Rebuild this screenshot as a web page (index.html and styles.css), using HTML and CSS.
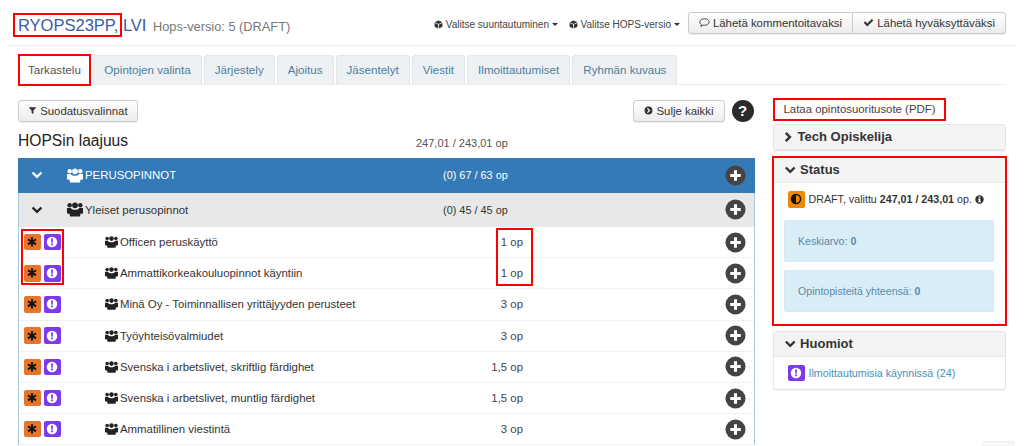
FILE: index.html
```html
<!doctype html>
<html lang="fi">
  <head>
    <meta charset="UTF-8" />
    <meta name="viewport" content="width=device-width, initial-scale=1.0" />
    <title>HOPS</title>
    <link rel="stylesheet" href="styles.css">
  </head>
  <body>
    <svg class="sprites" width="0" height="0" aria-hidden="true">
      <symbol id="i-users" viewBox="0 0 18 16">
        <circle cx="3" cy="3.200" r="2.500"/><circle cx="15" cy="3.200" r="2.500"/><circle cx="9" cy="3.300" r="3.200"/>
        <path d="M0 6.400h3.800c.3 0 .6.200.8.400.9 1 2.200 1.500 4.400 1.500s3.500-.5 4.400-1.500c.2-.2.5-.4.800-.4H18v5.300c0 .7-.4 1.100-1.100 1.100h-2V15c0 .6-.4 1-1 1H4.100c-.6 0-1-.4-1-1v-2.200h-2C.4 12.800 0 12.400 0 11.700z"/>
      </symbol>
      <symbol id="i-chev-down" viewBox="0 0 16 16">
        <path d="M1 5.800 3.300 3.500 8 8.200l4.700-4.700L15 5.800l-7 7z"/>
      </symbol>
      <symbol id="i-chev-right" viewBox="0 0 16 16">
        <path d="M5.200.8 12.600 8l-7.400 7.200-2.500-2.400L7.600 8 2.700 3.200z"/>
      </symbol>
      <symbol id="i-plus" viewBox="0 0 22 22">
        <circle cx="11" cy="11" r="10.500"/>
        <path fill="#fff" d="M9.400 5.500h3.200v3.900h3.900v3.200h-3.900v3.900H9.400v-3.900H5.500V9.400h3.900z"/>
      </symbol>
      <symbol id="i-star" viewBox="0 0 16 16">
        <path d="M6.600 1.500h2.800l-.3 4.200 3.500-2.300 1.400 2.400L10.200 7.800l3.800 2-1.400 2.400-3.500-2.300.3 4.200H6.600l.3-4.200-3.500 2.300L2 9.800l3.800-2L2 5.800l1.400-2.400 3.500 2.300z"/>
      </symbol>
      <symbol id="i-alert" viewBox="0 0 16 16">
        <circle cx="8" cy="8" r="7" fill="#fff"/>
        <path fill="#7c3aed" d="M6.700 3.200h2.600l-.3 5.800H7zM6.800 10h2.400v2.400H6.800z"/>
      </symbol>
      <symbol id="i-half" viewBox="0 0 16 16">
        <circle cx="8" cy="8" r="6" fill="none" stroke="#111" stroke-width="2"/>
        <path d="M8 2a6 6 0 0 0 0 12z"/>
      </symbol>
      <symbol id="i-info" viewBox="0 0 16 16">
        <circle cx="8" cy="8" r="7.500"/>
        <path fill="#fff" d="M6.500 2.800h3v2.200h-3zM5.800 6.300h3.700V11h1v2h-5v-2h1V8.300h-.7z"/>
      </symbol>
      <symbol id="i-cube" viewBox="0 0 16 16">
        <path d="M8 1 15 4 8 7 1 4zM1 5.200l6.300 2.700V15L1 12.200zM15 5.200 8.700 7.900V15L15 12.200z"/>
      </symbol>
      <symbol id="i-filter" viewBox="0 0 16 16">
        <path d="M1 2h14L9.700 8v6.500L6.300 12V8z"/>
      </symbol>
      <symbol id="i-check" viewBox="0 0 16 16">
        <path d="M1 8.500 3.200 6.300 6.200 9.300 12.800 2.800 15 5 6.200 13.800z"/>
      </symbol>
      <symbol id="i-comment" viewBox="0 0 16 16">
        <path fill="none" stroke="#333" stroke-width="1.300" d="M8 2.500c3.800 0 6.800 2.100 6.800 4.700S11.800 12 8 12c-.7 0-1.300-.1-1.900-.2-.9.8-2.200 1.500-3.900 1.700.8-.8 1.300-1.700 1.400-2.700C2.200 9.900 1.200 8.600 1.200 7.200 1.200 4.600 4.200 2.500 8 2.500z"/>
      </symbol>
      <symbol id="i-circle-right" viewBox="0 0 16 16">
        <circle cx="8" cy="8" r="7"/>
        <path fill="#fff" d="M6.800 3.500 11.300 8l-4.500 4.500-1.500-1.500 3-3-3-3z"/>
      </symbol>
    </svg>

    <header class="page-head">
      <h1 class="page-title"><span class="marked">RYOPS23PP,</span> LVI <small>Hops-versio: 5 (DRAFT)</small></h1>
      <div class="head-actions">
        <a class="head-link"><svg class="ico"><use href="#i-cube"/></svg> Valitse suuntautuminen <i class="caret"></i></a>
        <a class="head-link"><svg class="ico"><use href="#i-cube"/></svg> Valitse HOPS-versio <i class="caret"></i></a>
        <div class="btn-group">
          <button class="btn"><svg class="ico"><use href="#i-comment"/></svg> Lähetä kommentoitavaksi</button>
          <button class="btn"><svg class="ico"><use href="#i-check"/></svg> Lähetä hyväksyttäväksi</button>
        </div>
      </div>
    </header>

    <nav class="tabs">
      <a class="tab active">Tarkastelu</a>
      <a class="tab">Opintojen valinta</a>
      <a class="tab">Järjestely</a>
      <a class="tab">Ajoitus</a>
      <a class="tab">Jäsentelyt</a>
      <a class="tab">Viestit</a>
      <a class="tab">Ilmoittautumiset</a>
      <a class="tab">Ryhmän kuvaus</a>
    </nav>

    <div class="layout">
      <main class="main-col">
        <div class="toolbar">
          <button class="btn"><svg class="ico"><use href="#i-filter"/></svg> Suodatusvalinnat</button>
          <div class="toolbar-right">
            <button class="btn"><svg class="ico"><use href="#i-circle-right"/></svg> Sulje kaikki</button>
            <span class="help">?</span>
          </div>
        </div>
        <div class="scope">
          <h2>HOPSin laajuus</h2>
          <span class="scope-points">247,01 / 243,01 op</span>
        </div>

        <div class="tree">
          <div class="group group-primary">
            <svg class="chev"><use href="#i-chev-down"/></svg>
            <svg class="users"><use href="#i-users"/></svg>
            <span class="group-name">PERUSOPINNOT</span>
            <span class="group-points">(0) 67 / 63 op</span>
            <svg class="plus"><use href="#i-plus"/></svg>
          </div>
          <div class="group group-sub">
            <svg class="chev"><use href="#i-chev-down"/></svg>
            <svg class="users"><use href="#i-users"/></svg>
            <span class="group-name">Yleiset perusopinnot</span>
            <span class="group-points">(0) 45 / 45 op</span>
            <svg class="plus"><use href="#i-plus"/></svg>
          </div>

          <div class="row">
            <span class="flag flag-orange"><svg><use href="#i-star"/></svg></span>
            <span class="flag flag-purple"><svg><use href="#i-alert"/></svg></span>
            <svg class="users"><use href="#i-users"/></svg>
            <span class="row-name">Officen peruskäyttö</span>
            <span class="row-points">1 op</span>
            <svg class="plus"><use href="#i-plus"/></svg>
          </div>
          <div class="row">
            <span class="flag flag-orange"><svg><use href="#i-star"/></svg></span>
            <span class="flag flag-purple"><svg><use href="#i-alert"/></svg></span>
            <svg class="users"><use href="#i-users"/></svg>
            <span class="row-name">Ammattikorkeakouluopinnot käyntiin</span>
            <span class="row-points">1 op</span>
            <svg class="plus"><use href="#i-plus"/></svg>
          </div>
          <div class="row">
            <span class="flag flag-orange"><svg><use href="#i-star"/></svg></span>
            <span class="flag flag-purple"><svg><use href="#i-alert"/></svg></span>
            <svg class="users"><use href="#i-users"/></svg>
            <span class="row-name">Minä Oy - Toiminnallisen yrittäjyyden perusteet</span>
            <span class="row-points">3 op</span>
            <svg class="plus"><use href="#i-plus"/></svg>
          </div>
          <div class="row">
            <span class="flag flag-orange"><svg><use href="#i-star"/></svg></span>
            <span class="flag flag-purple"><svg><use href="#i-alert"/></svg></span>
            <svg class="users"><use href="#i-users"/></svg>
            <span class="row-name">Työyhteisövalmiudet</span>
            <span class="row-points">3 op</span>
            <svg class="plus"><use href="#i-plus"/></svg>
          </div>
          <div class="row">
            <span class="flag flag-orange"><svg><use href="#i-star"/></svg></span>
            <span class="flag flag-purple"><svg><use href="#i-alert"/></svg></span>
            <svg class="users"><use href="#i-users"/></svg>
            <span class="row-name">Svenska i arbetslivet, skriftlig färdighet</span>
            <span class="row-points">1,5 op</span>
            <svg class="plus"><use href="#i-plus"/></svg>
          </div>
          <div class="row">
            <span class="flag flag-orange"><svg><use href="#i-star"/></svg></span>
            <span class="flag flag-purple"><svg><use href="#i-alert"/></svg></span>
            <svg class="users"><use href="#i-users"/></svg>
            <span class="row-name">Svenska i arbetslivet, muntlig färdighet</span>
            <span class="row-points">1,5 op</span>
            <svg class="plus"><use href="#i-plus"/></svg>
          </div>
          <div class="row">
            <span class="flag flag-orange"><svg><use href="#i-star"/></svg></span>
            <span class="flag flag-purple"><svg><use href="#i-alert"/></svg></span>
            <svg class="users"><use href="#i-users"/></svg>
            <span class="row-name">Ammatillinen viestintä</span>
            <span class="row-points">3 op</span>
            <svg class="plus"><use href="#i-plus"/></svg>
          </div>

          <!-- punaiset merkinnät rivien päällä -->
          <div class="mark mark-flags"></div>
          <div class="mark mark-points"></div>
        </div>
      </main>

      <aside class="side-col">
        <a class="pdf-link">Lataa opintosuoritusote (PDF)</a>

        <section class="panel panel-tech">
          <h3 class="panel-head"><svg class="panel-chev"><use href="#i-chev-right"/></svg> Tech Opiskelija</h3>
        </section>

        <section class="panel panel-marked">
          <h3 class="panel-head"><svg class="panel-chev"><use href="#i-chev-down"/></svg> Status</h3>
          <div class="panel-body">
            <p class="status-line">
              <span class="flag flag-amber"><svg><use href="#i-half"/></svg></span>
              <span>DRAFT, valittu <b>247,01 / 243,01</b> op. <svg class="ico ico-info"><use href="#i-info"/></svg></span>
            </p>
            <div class="note">Keskiarvo: <b>0</b></div>
            <div class="note">Opintopisteitä yhteensä: <b>0</b></div>
          </div>
        </section>

        <section class="panel panel-notes">
          <h3 class="panel-head"><svg class="panel-chev"><use href="#i-chev-down"/></svg> Huomiot</h3>
          <div class="panel-body">
            <p class="status-line">
              <span class="flag flag-purple"><svg><use href="#i-alert"/></svg></span>
              <a class="notice-link">Ilmoittautumisia käynnissä (24)</a>
            </p>
          </div>
        </section>
      </aside>
    </div>

    <div class="to-top"></div>
  </body>
</html>
```

FILE: styles.css
```css
html, body {
  height: 446px;
  overflow: hidden;
}
body {
  margin: 0;
  font-family: "Liberation Sans", Arial, sans-serif;
  font-size: 11.400px;
  color: #333;
  background: #fff;
  position: relative;
}
.sprites {
  position: absolute;
}
.ico {
  width: 11px;
  height: 11px;
  fill: #333;
  vertical-align: -1px;
}

/* otsikko */
.page-head {
  display: flex;
  justify-content: space-between;
  align-items: center;
  height: 46px;
  margin: 0 8px;
  padding: 1px 10px 0;
  border-bottom: 1px solid #eee;
  box-sizing: border-box;
}
.page-title {
  margin: 0;
  padding-top: 5px;
  font-size: 16.500px;
  font-weight: normal;
  color: #3b5ba5;
  white-space: nowrap;
}
.page-title small {
  font-size: 12.800px;
  color: #777;
  margin-left: 2px;
}
.marked {
  padding: 1px 2px 1px 3px;
  margin: 0 -2px 0 -3px;
  outline: 2px solid #f00;
}
.head-actions {
  display: flex;
  align-items: center;
}
.head-link {
  font-size: 10px;
  color: #444;
  margin: 2px 11px 0 0;
  white-space: nowrap;
}
.head-link + .head-link {
  margin-right: 8px;
}
.head-link .ico {
  width: 9px;
  height: 9px;
}
.caret {
  display: inline-block;
  border-top: 3px solid #333;
  border-left: 3px solid transparent;
  border-right: 3px solid transparent;
  vertical-align: 2px;
}
.btn {
  font-family: inherit;
  font-size: 11.400px;
  color: #333;
  height: 22px;
  padding: 0 10px;
  background: linear-gradient(#fff, #ececec);
  border: 1px solid #ccc;
  border-radius: 3px;
  box-shadow: 0 1px 1px rgba(0,0,0,0.08);
  white-space: nowrap;
}
.btn-group {
  display: flex;
}
.btn-group .btn:first-child {
  border-radius: 3px 0 0 3px;
}
.btn-group .btn:last-child {
  border-left: none;
  border-radius: 0 3px 3px 0;
}

/* välilehdet */
.tabs {
  display: flex;
  gap: 2px;
  height: 30px;
  margin: 9px 18px 0;
  border-bottom: 1px solid #eee;
  box-sizing: border-box;
}
.tab {
  padding: 0 10px;
  line-height: 28px;
  font-size: 11.600px;
  color: #4a7f9c;
  background: #edf1f4;
  border: 1px solid #e2e6e8;
  border-bottom: none;
  border-radius: 3px 3px 0 0;
}
.tab.active {
  margin: 1px 2px 0 1.500px;
  padding: 0 8.500px;
  line-height: 27px;
  color: #555;
  background: #fff;
  border: none;
  border-radius: 0;
  outline: 2px solid #f00;
}

/* sarakkeet */
.layout {
  display: flex;
  gap: 18px;
  margin: 15px 18px 0;
}
.main-col {
  width: 737px;
}
.side-col {
  width: 233px;
}
.toolbar {
  display: flex;
  justify-content: space-between;
  align-items: center;
  height: 22px;
}
.toolbar .ico {
  width: 9px;
  height: 9px;
  vertical-align: 0;
}
.toolbar > .btn {
  padding: 0 9px;
}
.toolbar-right {
  display: flex;
  align-items: center;
  gap: 7px;
  margin-right: 1.500px;
}
.help {
  width: 22px;
  height: 22px;
  border-radius: 50%;
  background: #2b2b2b;
  color: #fff;
  font-weight: bold;
  font-size: 15px;
  line-height: 22px;
  text-align: center;
}
.scope {
  display: flex;
  align-items: center;
  height: 36px;
  padding-top: 2px;
  box-sizing: border-box;
}
.scope h2 {
  width: 398px;
  margin: 0;
  font-size: 15.600px;
  font-weight: normal;
  color: #222;
}
.scope-points {
  font-size: 11px;
  color: #555;
  padding-top: 3px;
}

/* puu */
.tree {
  position: relative;
  border-left: 1px solid #a9c7e4;
  border-right: 1px solid #a9c7e4;
}
.group, .row {
  display: flex;
  align-items: center;
}
.group {
  height: 34.500px;
}
.group-primary {
  background: #337ab7;
  color: #fff;
  fill: #fff;
  margin: 0 -1px;
  padding: 0 1px;
}
.group-sub {
  background: #e8e8e8;
  fill: #222;
  color: #333;
}
.chev {
  width: 12px;
  height: 12px;
  margin: 0 24px 0 12px;
  flex: none;
}
.group .users {
  width: 16px;
  height: 15px;
  flex: none;
  margin-right: 2px;
}
.group-name {
  width: 358px;
  flex: none;
}
.group-points {
  font-size: 10.900px;
  flex: 1;
}
.plus {
  width: 21px;
  height: 21px;
  fill: #444;
  flex: none;
  margin-right: 8px;
}
.row {
  height: 31.200px;
  box-sizing: border-box;
  border-bottom: 1px solid #f0f0f0;
  padding-left: 5px;
  fill: #222;
}
.row .users {
  width: 13px;
  height: 12px;
  flex: none;
  margin: 0 2px 0 41px;
}
.row-name {
  width: 342px;
  flex: none;
  color: #333;
}
.row-points {
  width: 61px;
  flex: none;
  text-align: right;
  color: #444;
}
.row .plus {
  margin-left: auto;
}
.flag {
  display: inline-flex;
  align-items: center;
  justify-content: center;
  width: 16.500px;
  height: 16.500px;
  border-radius: 2px;
  margin-right: 3.500px;
  flex: none;
}
.flag svg {
  width: 12px;
  height: 12px;
}
.flag-orange {
  background: #e5742c;
  fill: #111;
}
.flag-purple {
  background: #7c3aed;
}
.flag-amber {
  background: #ee8a00;
  fill: #111;
}
.mark {
  position: absolute;
  border: 2px solid #f00;
  box-sizing: border-box;
}
.mark-flags {
  left: 1.500px;
  top: 71px;
  width: 43px;
  height: 56px;
}
.mark-points {
  left: 477px;
  top: 70px;
  width: 37px;
  height: 58px;
}

/* oikea sarake */
.pdf-link {
  display: block;
  width: 173px;
  height: 23px;
  margin-top: -2px;
  line-height: 22px;
  text-align: center;
  color: #444;
  outline: 2px solid #f00;
  outline-offset: -2px;
}
.panel {
  background: #fff;
  border: 1px solid #e4e4e4;
  border-radius: 3px;
  box-shadow: 0 1px 1px rgba(0,0,0,0.05);
}
.panel-tech {
  margin-top: 3px;
}
.panel-tech .panel-head {
  padding-left: 9px;
}
.panel-tech .panel-chev {
  width: 11px;
}
.panel-notes {
  margin-top: 5px;
}
.panel-head {
  margin: 0;
  height: 24px;
  line-height: 24px;
  padding-left: 10px;
  font-size: 13px;
  font-weight: bold;
  color: #333;
  background: #f4f4f4;
  border-bottom: 1px solid #e8e8e8;
}
.panel-chev {
  width: 12.500px;
  height: 12px;
  fill: #333;
  vertical-align: -2px;
}
.panel-body {
  padding: 8px 10px;
}
.panel-marked {
  margin: 5px -0.500px 0 -1px;
  border: 2px solid #f00;
  border-radius: 0;
  box-shadow: none;
}
.panel-marked .panel-body {
  padding: 8px 11px 12px 10px;
}
.status-line {
  display: flex;
  align-items: center;
  gap: 4px;
  margin: 0 0 0 4px;
  color: #333;
  font-size: 10.700px;
  white-space: nowrap;
}
.status-line .flag {
  margin-right: 0;
}
.ico-info {
  width: 9px;
  height: 9px;
}
.note {
  margin-top: 8px;
  height: 42px;
  line-height: 40px;
  padding-left: 13px;
  background: #d9edf7;
  border: 1px solid #d2e9f3;
  box-sizing: border-box;
  border-radius: 2px;
  color: #5a8aa8;
  font-size: 10.600px;
}
.status-line + .note {
  margin-top: 12px;
}
.notice-link {
  color: #4b8fb0;
}
.to-top {
  position: absolute;
  left: 982px;
  top: 441px;
  width: 31px;
  height: 12px;
  background: #f8f8f8;
  border: 1px solid #eee;
  border-radius: 3px;
}
```
